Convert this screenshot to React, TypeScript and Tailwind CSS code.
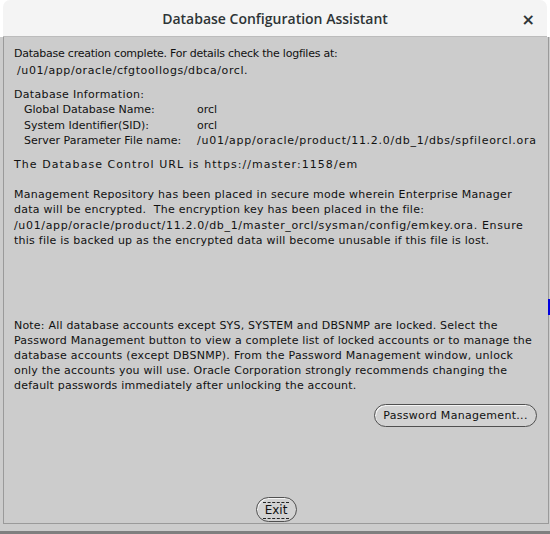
const body = "font-['DejaVu_Sans',sans-serif] text-[11px] text-[#111]";

const PillButton = ({
  children,
  className = "",
  focused = false,
}: {
  children: React.ReactNode;
  className?: string;
  focused?: boolean;
}) => (
  <button
    className={`rounded-full border border-[#505050] bg-[#d2d2d2] shadow-[inset_1px_1px_0_#f4f4f4] ${className}`}
  >
    <span
      className={
        focused
          ? "border-y border-dashed border-[#222] px-[2px] leading-[15px] inline-block"
          : "inline-block"
      }
    >
      {children}
    </span>
  </button>
);

export default function App() {
  return (
    <div className="w-[550px] h-[534px] bg-[#cccccc] flex flex-col overflow-hidden">
      {/* window title */}
      <div className="bg-white px-[3px]">
        <div className="relative h-[37px] rounded-t-[7px] bg-[#f4f4f4] border-b border-[#bcbcbc] flex items-center justify-center">
          <span className="font-['Open_Sans',sans-serif] text-[14px] font-semibold text-[#2e3436]">
            Database Configuration Assistant
          </span>
          <span className="absolute right-[12px] top-[8px] text-[16px] font-bold text-[#2e3436] font-['DejaVu_Sans',sans-serif]">
            ×
          </span>
        </div>
      </div>

      <div className="flex-1 flex flex-col ml-[3px] mr-[1px] border-x border-b border-[#9a9a9a] relative">
        <div className={`${body} pl-[10px] pr-[6px] pt-[8px] whitespace-nowrap`}>
          <div className="leading-[17px]">
            <div className="tracking-[-0.24px]">Database creation complete. For details check the logfiles at:</div>
            <div className="pl-[3px] tracking-[0.6px]">/u01/app/oracle/cfgtoollogs/dbca/orcl.</div>
          </div>

          <div className="mt-[8px] leading-[15.3px]">
            <div className="tracking-[0.33px]">Database Information:</div>
            <div className="grid grid-cols-[173px_1fr] pl-[10px]">
              <span>Global Database Name:</span>
              <span>orcl</span>
              <span>System Identifier(SID):</span>
              <span>orcl</span>
              <span>Server Parameter File name:</span>
              <span className="tracking-[0.74px]">/u01/app/oracle/product/11.2.0/db_1/dbs/spfileorcl.ora</span>
            </div>
          </div>

          <div className="mt-[9px] leading-[15px] tracking-[1.05px]">
            The Database Control URL is https://master:1158/em
          </div>

          <div className="mt-[15px] leading-[15.3px]">
            <div className="tracking-[0.28px]">Management Repository has been placed in secure mode wherein Enterprise Manager</div>
            <div className="tracking-[0.25px]">data will be encrypted.&nbsp; The encryption key has been placed in the file:</div>
            <div className="tracking-[0.65px]">/u01/app/oracle/product/11.2.0/db_1/master_orcl/sysman/config/emkey.ora. Ensure</div>
            <div className="tracking-[0.24px]">this file is backed up as the encrypted data will become unusable if this file is lost.</div>
          </div>

          <div className="mt-[70px] leading-[15px] tracking-[0.2px]">
            <div>Note: All database accounts except SYS, SYSTEM and DBSNMP are locked. Select the</div>
            <div>Password Management button to view a complete list of locked accounts or to manage the</div>
            <div className="tracking-[0.26px]">database accounts (except DBSNMP). From the Password Management window, unlock</div>
            <div>only the accounts you will use. Oracle Corporation strongly recommends changing the</div>
            <div>default passwords immediately after unlocking the account.</div>
          </div>

          <div className="flex justify-end mt-[11px] pr-[5px]">
            <PillButton className="w-[163px] h-[23px] tracking-[0.3px]">Password Management...</PillButton>
          </div>
        </div>

        <div className={`${body} mt-auto mb-[1px] flex justify-center`}>
          <PillButton className="w-[41px] h-[25px] text-[12px]" focused>
            Exit
          </PillButton>
        </div>

        <div className="absolute right-[-2px] top-[262px] w-[2px] h-[16px] bg-[#0000e0]" />
      </div>

      <div className="h-[7px]" />
      <div className="h-[3px] bg-[#7f7f7f]" />
    </div>
  );
}
